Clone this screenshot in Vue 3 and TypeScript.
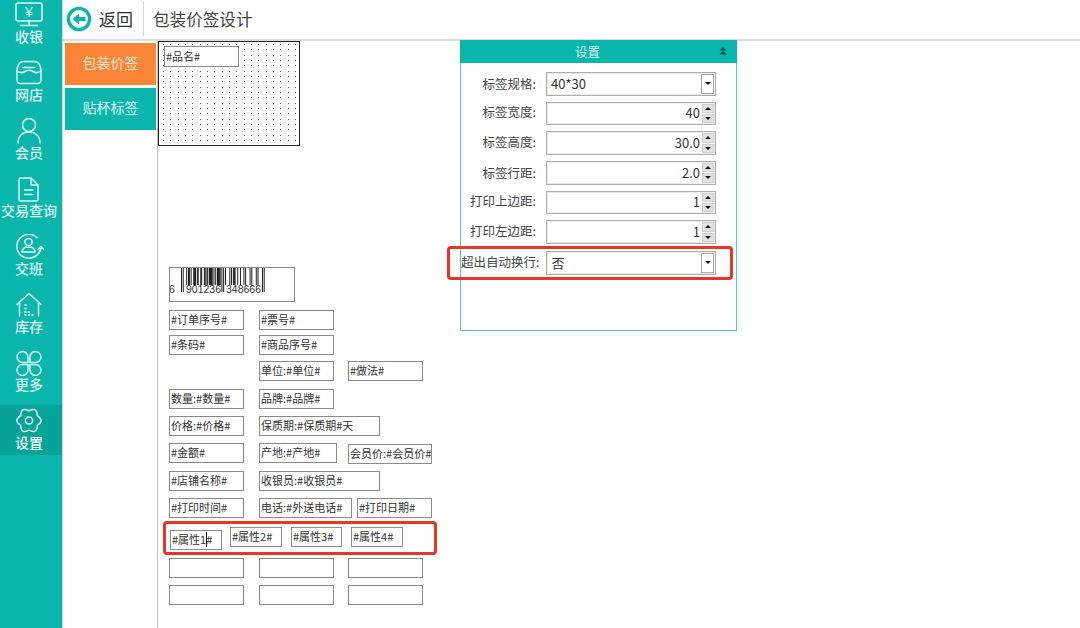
<script setup lang="ts">
interface Box { text: string; x: number; y: number; w: number; h?: number }

const ORIGIN_X = 158
const ORIGIN_Y = 41

const boxes: Box[] = [
  { text: '#订单序号#', x: 169, y: 310, w: 75 },
  { text: '#票号#', x: 259, y: 310, w: 75 },
  { text: '#条码#', x: 169, y: 335, w: 75 },
  { text: '#商品序号#', x: 259, y: 335, w: 75 },
  { text: '单位:#单位#', x: 259, y: 361, w: 75 },
  { text: '#做法#', x: 348, y: 361, w: 75 },
  { text: '数量:#数量#', x: 169, y: 389, w: 75 },
  { text: '品牌:#品牌#', x: 259, y: 389, w: 75 },
  { text: '价格:#价格#', x: 169, y: 416, w: 75 },
  { text: '保质期:#保质期#天', x: 259, y: 416, w: 121 },
  { text: '#金额#', x: 169, y: 443, w: 75 },
  { text: '产地:#产地#', x: 259, y: 443, w: 78 },
  { text: '会员价:#会员价#', x: 348, y: 444, w: 84 },
  { text: '#店铺名称#', x: 169, y: 471, w: 75 },
  { text: '收银员:#收银员#', x: 259, y: 471, w: 121 },
  { text: '#打印时间#', x: 169, y: 498, w: 75 },
  { text: '电话:#外送电话#', x: 259, y: 498, w: 93 },
  { text: '#打印日期#', x: 357, y: 498, w: 75 },
  { text: '#属性1#', x: 170, y: 530, w: 52 },
  { text: '#属性2#', x: 230, y: 527, w: 52 },
  { text: '#属性3#', x: 291, y: 527, w: 51 },
  { text: '#属性4#', x: 351, y: 527, w: 52 },
  { text: '', x: 169, y: 558, w: 75 },
  { text: '', x: 259, y: 558, w: 75 },
  { text: '', x: 348, y: 558, w: 75 },
  { text: '', x: 169, y: 585, w: 75 },
  { text: '', x: 259, y: 585, w: 75 },
  { text: '', x: 348, y: 585, w: 75 }
]

function place(b: { x: number; y: number; w: number; h?: number }) {
  return {
    left: `${b.x - ORIGIN_X}px`,
    top: `${b.y - ORIGIN_Y}px`,
    width: `${b.w}px`,
    height: `${b.h ?? 20}px`
  }
}

const nameBox = { x: 164, y: 46, w: 75, h: 21 }
const barcodeBox = { x: 169, y: 267, w: 126, h: 35 }
const caretBox = { x: 206, y: 532, w: 1, h: 15 }
const redBoxes = [
  { x: 447, y: 246, w: 286, h: 34 },
  { x: 163, y: 521, w: 274, h: 34 }
]

const navItems = ['收银', '网店', '会员', '交易查询', '交班', '库存', '更多', '设置']

interface Field { label: string; value: string; kind: 'combo' | 'spin'; wide?: boolean; lift?: boolean }
const fields: Field[] = [
  { label: '标签规格:', value: '40*30', kind: 'combo' },
  { label: '标签宽度:', value: '40', kind: 'spin', lift: true },
  { label: '标签高度:', value: '30.0', kind: 'spin', lift: true },
  { label: '标签行距:', value: '2.0', kind: 'spin' },
  { label: '打印上边距:', value: '1', kind: 'spin', lift: true },
  { label: '打印左边距:', value: '1', kind: 'spin', lift: true },
  { label: '超出自动换行:', value: '否', kind: 'combo', wide: true }
]

// dot grid of the label paper: the 22x16 tile holds three columns and three rows
const dotTile: { x: number; y: number }[] = []
for (const x of [0, 7, 15]) for (const y of [0, 5, 11]) dotTile.push({ x, y })

// EAN-13 bars for the sample code on the label
function eanBars(code: string) {
  const L = ['0001101', '0011001', '0010011', '0111101', '0100011', '0110001', '0101111', '0111011', '0110111', '0001011']
  const G = ['0100111', '0110011', '0011011', '0100001', '0011101', '0111001', '0000101', '0010001', '0001001', '0010111']
  const R = L.map((s) => s.split('').map((c) => (c === '0' ? '1' : '0')).join(''))
  const parity = ['LLLLLL', 'LLGLGG', 'LLGGLG', 'LLGGGL', 'LGLLGG', 'LGGLLG', 'LGGGLL', 'LGLGLG', 'LGLGGL', 'LGGLGL'][Number(code[0])]
  let bits = '101'
  for (let i = 0; i < 6; i++) bits += (parity[i] === 'L' ? L : G)[Number(code[i + 1])]
  bits += '01010'
  for (let i = 0; i < 6; i++) bits += R[Number(code[i + 7])]
  bits += '101'
  const out: { x: number; h: number }[] = []
  bits.split('').forEach((b, i) => {
    if (b === '1') {
      const guard = i < 3 || (i >= 45 && i < 50) || i >= 92
      out.push({ x: i, h: guard ? 24 : 17 })
    }
  })
  return out
}
const bars = eanBars('6901236348666')

function gear() {
  const cx = 15
  const cy = 12.5
  const pt = (r: number, deg: number) => {
    const a = (deg * Math.PI) / 180
    return `${(cx + r * Math.cos(a)).toFixed(2)} ${(cy + r * Math.sin(a)).toFixed(2)}`
  }
  let d = `M${pt(9.6, -30)}`
  for (let i = 0; i < 6; i++) {
    const c = i * 60
    d += ` Q${pt(16, c)} ${pt(9.6, c + 30)}`
  }
  return d + ' Z'
}
const gearPath = gear()
</script>

<template>
  <div class="app">
    <aside class="sidebar">
      <div
        v-for="(item, i) in navItems"
        :key="item"
        class="nav-item"
        :class="{ active: item === '设置' }"
      >
        <svg class="nav-icon" viewBox="0 0 30 26" width="30" height="26">
          <g v-if="i === 0">
            <rect x="2" y="1" width="26" height="18" rx="2" />
            <path d="M15 19V23.5M6.5 23.5H23.5" />
            <text x="15" y="15" class="yen">¥</text>
          </g>
          <g v-else-if="i === 1">
            <path d="M3 11C3 5 6 1.5 9 1.5H21C24 1.5 27 5 27 11V20A3.5 3.5 0 0 1 23.5 23.5H6.5A3.5 3.5 0 0 1 3 20Z" />
            <path d="M3 11Q7 14 11 11.5T19 11.5T27 11M9 7.5H21" />
          </g>
          <g v-else-if="i === 2">
            <circle cx="15" cy="7" r="6.5" />
            <path d="M4 25C4 17.5 9 14 15 14C21 14 26 17.5 26 25" />
          </g>
          <g v-else-if="i === 3">
            <path d="M6.5 2H17L24 9V23.5A1.5 1.5 0 0 1 22.5 25H6.5A1.5 1.5 0 0 1 5 23.5V3.5A1.5 1.5 0 0 1 6.5 2Z" />
            <path d="M17 2V9H24M10.5 14H19M10.5 18.5H19" />
          </g>
          <g v-else-if="i === 4">
            <path d="M23 3.5A12 12 0 1 0 24 20Q27 17 27 13M24 15.5L27 12.5L30 15.5" />
            <circle cx="14.5" cy="8" r="3.6" />
            <path d="M8 18C8 14 11 13 14.5 13S21 14 21 18Z" />
          </g>
          <g v-else-if="i === 5">
            <path d="M3 12.5L15 1.5L27 12.5M5.5 11V24M24.5 11V24" />
            <path class="solid" d="M10.5 12h2v2h-2zM10.5 15.5h2v2h-2zM10.5 19h2v2h-2zM10.5 22h2v2h-2zM14 19h2v2h-2zM14 22h2v2h-2zM17.5 22h2v2h-2z" />
          </g>
          <g v-else-if="i === 6">
            <path d="M14 12.5V7.5A5.5 5.5 0 1 0 8.5 12.5Z" />
            <path transform="translate(30,0) scale(-1,1)" d="M14 12.5V7.5A5.5 5.5 0 1 0 8.5 12.5Z" />
            <path transform="translate(0,27) scale(1,-1)" d="M14 12.5V7.5A5.5 5.5 0 1 0 8.5 12.5Z" />
            <path transform="translate(30,27) scale(-1,-1)" d="M14 12.5V7.5A5.5 5.5 0 1 0 8.5 12.5Z" />
          </g>
          <g v-else>
            <path :d="gearPath" />
            <circle cx="15" cy="12.5" r="3.6" />
          </g>
        </svg>
        <span class="nav-label">{{ item }}</span>
      </div>
    </aside>

    <main class="main">
      <header class="topbar">
        <svg class="back-icon" viewBox="0 0 26 26" width="26" height="26">
          <circle cx="13" cy="13" r="10.6" fill="none" stroke="#0ab5ab" stroke-width="3.4" />
          <path fill="#0ab5ab" d="M6.5 13L13 7.5V11H19.5V15H13V18.5Z" />
        </svg>
        <span class="back-text">返回</span>
        <span class="divider"></span>
        <span class="page-title">包装价签设计</span>
      </header>

      <div class="body">
        <nav class="tabs">
          <div class="tab tab-on">包装价签</div>
          <div class="tab">贴杯标签</div>
        </nav>

        <section class="canvas">
          <div class="paper">
            <svg width="140" height="103" shape-rendering="crispEdges">
              <defs>
                <pattern id="paper-dots" x="4" y="2" width="22" height="16" patternUnits="userSpaceOnUse">
                  <rect v-for="d in dotTile" :key="`${d.x}-${d.y}`" :x="d.x" :y="d.y" width="1" height="1" fill="#5a5a5a" />
                </pattern>
              </defs>
              <rect width="140" height="103" fill="url(#paper-dots)" />
            </svg>
          </div>
          <div class="label-box" :style="place(nameBox)">#品名#</div>

          <div class="label-box barcode" :style="place(barcodeBox)">
            <svg viewBox="0 0 126 35" width="126" height="35">
              <g transform="translate(12,0) scale(0.88,1)">
                <rect v-for="b in bars" :key="b.x" :x="b.x" y="0" width="1" :height="b.h" fill="#000" />
              </g>
              <text x="0" y="25" class="bar-digits">6</text>
              <text x="17" y="25" class="bar-digits">901236</text>
              <text x="57" y="25" class="bar-digits">348666</text>
            </svg>
          </div>

          <div v-for="b in boxes" :key="`${b.x}-${b.y}`" class="label-box" :style="place(b)">{{ b.text }}</div>
          <i class="caret" :style="place(caretBox)"></i>

          <div class="panel">
            <div class="panel-head">
              <span>设置</span>
              <svg class="collapse" viewBox="0 0 8 8" width="8" height="8">
                <path d="M4 0L7.5 3.5H0.5ZM4 3.5L7.5 7.5H0.5Z" fill="#0d5a52" />
              </svg>
            </div>
            <div class="form">
              <div
                v-for="f in fields"
                :key="f.label"
                class="row"
                :class="{ 'row-wide': f.wide, 'row-lift': f.lift }"
              >
                <label class="row-label">{{ f.label }}</label>
                <div class="input" :class="f.kind">
                  <span class="value">{{ f.value }}</span>
                  <span v-if="f.kind === 'combo'" class="combo-btn"><b class="tri down"></b></span>
                  <span v-else class="spin-col">
                    <span class="spin-btn"><b class="tri up"></b></span>
                    <span class="spin-btn"><b class="tri down"></b></span>
                  </span>
                </div>
              </div>
            </div>
          </div>

          <div v-for="r in redBoxes" :key="r.y" class="red-box" :style="place(r)"></div>
        </section>
      </div>
    </main>
  </div>
</template>

<style>
html, body { margin: 0; background: #fff; }
</style>

<style scoped>
.app {
  display: flex;
  width: 1080px;
  height: 628px;
  overflow: hidden;
  background: #fff;
  color: #333;
  font-family: "Noto Sans CJK SC", "Noto Sans", sans-serif;
}
.sidebar {
  flex: 0 0 62px;
  display: flex;
  flex-direction: column;
  gap: 8px;
  margin-top: -1px;
  background: #0ab5ab;
  border-right: 1px solid #c9dedc;
}
.nav-item {
  height: 50px;
  padding: 3px 4px 0 0;
  box-sizing: border-box;
  display: flex;
  flex-direction: column;
  align-items: center;
}
.nav-item.active { background: #07a399; }
.nav-icon { flex: none; fill: none; stroke: #dcf6f3; stroke-width: 1.5; stroke-linecap: round; stroke-linejoin: round; }
.nav-icon .solid { fill: #dcf6f3; stroke: none; }
.nav-icon .yen { fill: #dcf6f3; stroke: none; font-size: 14px; text-anchor: middle; font-family: "Liberation Sans", sans-serif; }
.nav-label {
  font-size: 14px;
  line-height: 16px;
  font-weight: 500;
  color: #dff6f4;
  white-space: nowrap;
}
.active .nav-label { color: #f2fbfa; }

.main { flex: 1; display: flex; flex-direction: column; min-width: 0; }
.topbar {
  height: 41px;
  box-sizing: border-box;
  display: flex;
  align-items: center;
  border-bottom: 2px solid #dedede;
  padding: 0 0 2px 3px;
}
.back-icon { flex: none; }
.back-text { margin-left: 7px; font-size: 17px; color: #333; }
.divider { width: 1px; height: 35px; margin: 0 9px 0 10px; background: #d8d8d8; }
.page-title { font-size: 16.6px; color: #444; }

.body { flex: 1; display: flex; min-height: 0; }
.tabs {
  flex: 0 0 95px;
  box-sizing: border-box;
  border-right: 1px solid #c4c4c4;
  padding: 2px 0 0 2px;
  display: flex;
  flex-direction: column;
  gap: 3px;
}
.tab {
  width: 91px;
  height: 42px;
  box-sizing: border-box;
  padding-bottom: 4px;
  display: flex;
  align-items: center;
  justify-content: center;
  background: #0ab5ab;
  color: #dff6f4;
  font-size: 14px;
}
.tab-on { background: #fb8436; color: #ffe7d6; }

.canvas { position: relative; flex: 1; min-width: 0; }
.paper {
  position: absolute;
  left: 0;
  top: 0;
  width: 142px;
  height: 105px;
  box-sizing: border-box;
  border: 1px solid #222;
  background: #fff;
}
.paper svg { display: block; }
.label-box {
  position: absolute;
  box-sizing: border-box;
  display: flex;
  align-items: center;
  padding: 0 0 2px 1px;
  border: 1px solid #8a8a8a;
  background: #fff;
  font-size: 11px;
  color: #333;
  white-space: nowrap;
  overflow: hidden;
}
.barcode { padding: 0; align-items: flex-start; }
.barcode svg { flex: none; margin: 0 0 0 -1px; }
.bar-digits { font-size: 10.5px; fill: #333; font-family: "Liberation Sans", sans-serif; }
.caret { position: absolute; background: #111; }

.panel {
  position: relative;
  box-sizing: border-box;
  width: 277px;
  height: 291px;
  margin: -1px 0 0 302px;
  border: 1px solid #55c9c1;
  background: #fff;
}
.panel-head {
  position: relative;
  height: 22px;
  box-sizing: content-box;
  display: flex;
  align-items: center;
  justify-content: center;
  background: #0ab5ab;
  color: #dff6f4;
  font-size: 12.5px;
  margin: -1px -1px 0;
  padding: 0 22px 1px 0;
}
.collapse { position: absolute; right: 10px; top: 7px; }
.form { display: flex; flex-direction: column; gap: 6px; padding-top: 9px; }
.row { display: flex; align-items: center; height: 23.67px; }
.row-label {
  flex: 0 0 75px;
  margin-right: 10px;
  text-align: right;
  font-size: 12.5px;
  color: #444;
  white-space: nowrap;
}
.row-lift .row-label { padding-bottom: 4px; }
.row-lift .value { padding-bottom: 2px; }
.row-wide { margin-top: 1px; }
.row-wide .row-label { flex-basis: 78px; margin-right: 7px; padding-bottom: 2px; }
.input {
  position: relative;
  width: 170px;
  height: 100%;
  box-sizing: border-box;
  display: flex;
  align-items: center;
  border: 1px solid #aeaeae;
  box-shadow: inset 0 0 0 1px #ececec;
  background: #fff;
  font-size: 13px;
  color: #333;
}
.combo .value { padding-left: 4px; }
.input.spin .value { margin-left: auto; margin-right: 15px; }
.combo-btn {
  position: absolute;
  right: 1px;
  top: 1px;
  bottom: 1px;
  width: 13px;
  box-sizing: border-box;
  border: 1px solid #aaa;
  background: #fff;
  display: flex;
  align-items: center;
  justify-content: center;
}
.spin-col {
  position: absolute;
  right: 1px;
  top: 1px;
  bottom: 1px;
  width: 12px;
  display: flex;
  flex-direction: column;
  gap: 1px;
}
.spin-btn {
  flex: 1;
  box-sizing: border-box;
  border: 1px solid #cfcfcf;
  background: #e2e2e2;
  display: flex;
  align-items: center;
  justify-content: center;
}
.tri { width: 0; height: 0; border-left: 3px solid transparent; border-right: 3px solid transparent; }
.tri.up { border-bottom: 3px solid #111; }
.tri.down { border-top: 3px solid #111; }

.red-box {
  position: absolute;
  box-sizing: border-box;
  border: 3px solid #e8352b;
  border-radius: 4px;
  pointer-events: none;
}
</style>
